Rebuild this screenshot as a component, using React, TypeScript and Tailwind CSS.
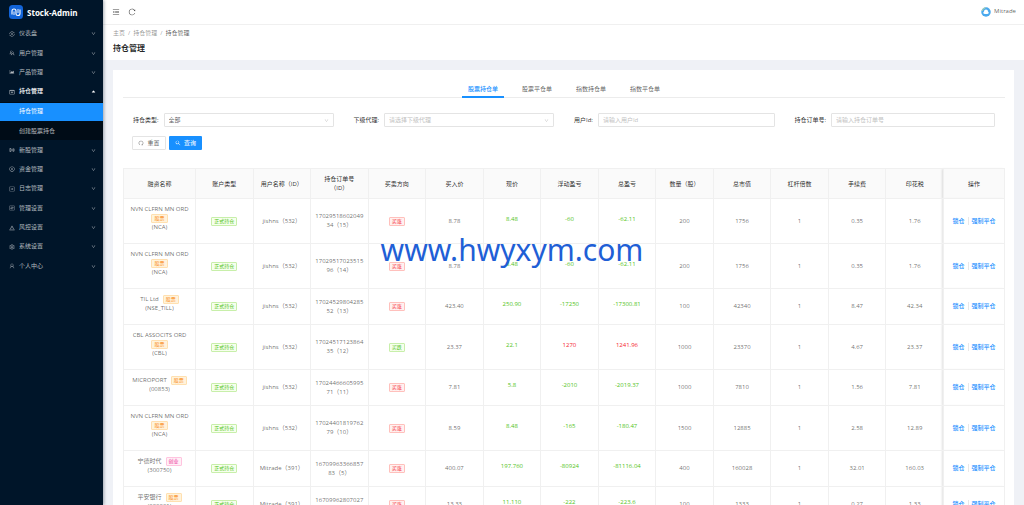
import {
  AiOutlineAreaChart,
  AiOutlineAccountBook,
  AiOutlineControl,
  AiOutlineDown,
  AiOutlineMenuFold,
  AiOutlinePayCircle,
  AiOutlineProfile,
  AiOutlineRedo,
  AiOutlineReload,
  AiOutlineSearch,
  AiOutlineSetting,
  AiOutlineSliders,
  AiOutlineTeam,
  AiOutlineTransaction,
  AiOutlineUser,
  AiOutlineWarning,
  AiFillCaretUp,
} from 'react-icons/ai'

const menu = [
  { label: '仪表盘', icon: AiOutlineTransaction },
  { label: '用户管理', icon: AiOutlineTeam },
  { label: '产品管理', icon: AiOutlineAreaChart },
  { label: '持仓管理', icon: AiOutlineAccountBook, children: ['持仓管理', '创建股票持仓'] },
  { label: '新股管理', icon: AiOutlineSliders },
  { label: '资金管理', icon: AiOutlinePayCircle },
  { label: '日志管理', icon: AiOutlineProfile },
  { label: '管理设置', icon: AiOutlineControl },
  { label: '风控设置', icon: AiOutlineWarning },
  { label: '系统设置', icon: AiOutlineSetting },
  { label: '个人中心', icon: AiOutlineUser },
]

const tabs = ['股票持仓单', '股票平仓单', '指数持仓单', '指数平仓单']

const columns = [
  '融资名称', '账户类型', '用户名称（ID）', '持仓订单号（ID）', '买卖方向', '买入价', '现价', '浮动盈亏',
  '总盈亏', '数量（股）', '总市值', '杠杆倍数', '手续费', '印花税', '操作',
]

const rows = [
  { name: 'NVN CLFRN MN ORD', code: 'NCA', tag: '股票', user: 'jishns（532）', order: ['17029518602049', '34（15）'], side: '买涨', buy: '8.78', price: '8.48', float: '-60', total: '-62.11', qty: '200', value: '1756', lever: '1', fee: '0.35', tax: '1.76' },
  { name: 'NVN CLFRN MN ORD', code: 'NCA', tag: '股票', user: 'jishns（532）', order: ['17029517023515', '96（14）'], side: '买涨', buy: '8.78', price: '8.48', float: '-60', total: '-62.11', qty: '200', value: '1756', lever: '1', fee: '0.35', tax: '1.76' },
  { name: 'TIL Ltd', code: 'NSE_TILL', tag: '股票', user: 'jishns（532）', order: ['17024529804285', '52（13）'], side: '买涨', buy: '423.40', price: '250.90', float: '-17250', total: '-17300.81', qty: '100', value: '42340', lever: '1', fee: '8.47', tax: '42.34' },
  { name: 'CBL ASSOCITS ORD', code: 'CBL', tag: '股票', user: 'jishns（532）', order: ['17024517123864', '35（12）'], side: '买跌', buy: '23.37', price: '22.1', float: '1270', total: '1241.96', qty: '1000', value: '23370', lever: '1', fee: '4.67', tax: '23.37' },
  { name: 'MICROPORT', code: '00853', tag: '股票', user: 'jishns（532）', order: ['17024466605995', '71（11）'], side: '买涨', buy: '7.81', price: '5.8', float: '-2010', total: '-2019.37', qty: '1000', value: '7810', lever: '1', fee: '1.56', tax: '7.81' },
  { name: 'NVN CLFRN MN ORD', code: 'NCA', tag: '股票', user: 'jishns（532）', order: ['17024401819762', '79（10）'], side: '买涨', buy: '8.59', price: '8.48', float: '-165', total: '-180.47', qty: '1500', value: '12885', lever: '1', fee: '2.58', tax: '12.89' },
  { name: '宁德时代', code: '300750', tag: '创业', user: 'Mitrade（391）', order: ['16709963366857', '83（5）'], side: '买涨', buy: '400.07', price: '197.760', float: '-80924', total: '-81116.04', qty: '400', value: '160028', lever: '1', fee: '32.01', tax: '160.03' },
  { name: '平安银行', code: '000001', tag: '股票', user: 'Mitrade（391）', order: ['16709962807027', '20（4）'], side: '买涨', buy: '13.33', price: '11.110', float: '-222', total: '-223.6', qty: '100', value: '1333', lever: '1', fee: '0.27', tax: '1.33' },
]

const tagColors = {
  orange: 'border-[#ffe0b0] bg-[#fff3dc] text-[#fa8c16]',
  pink: 'border-[#ffc4df] bg-[#fff0f6] text-[#eb2f96]',
  green: 'border-[#c8efaa] bg-[#f6ffed] text-[#52c41a]',
  red: 'border-[#ffc0bc] bg-[#fff1f0] text-[#f5222d]',
}

function Tag({ color, children }: { color: keyof typeof tagColors; children: string }) {
  return (
    <span className={`inline-block rounded-[1px] border px-[2px] text-[5px] leading-[7px] ${tagColors[color]}`}>
      {children}
    </span>
  )
}

function Sidebar() {
  return (
    <aside className="z-10 flex w-[103px] shrink-0 flex-col bg-[#001529] text-white/70 shadow-[1px_0_3px_rgba(0,21,41,0.35)]">
      <div className="flex h-6 items-center gap-1 pl-[9px]">
        <svg viewBox="0 0 28 28" className="size-[14px]" aria-hidden="true">
          <rect width="28" height="28" rx="7" fill="#1264d8" />
          <path d="M6 19v-7q0-4 4-4t4 4v6q0 3 4 3t4-4V9" fill="none" stroke="#fff" strokeWidth="2.200" />
          <path d="M10 13v7M18 8v8" fill="none" stroke="#fff" strokeWidth="1.800" />
        </svg>
        <span className="text-[8px] font-bold text-white">Stock-Admin</span>
      </div>
      <nav className="flex h-[252px] flex-col">
        {menu.map(({ label, icon: Icon, children }) => (
          <div key={label} className={`flex flex-col ${children ? 'flex-[3]' : 'flex-1'}`}>
            <button className={`flex w-full flex-1 items-center pl-[9px] pr-[7px] ${children ? 'font-medium text-white' : ''}`}>
              <Icon className="mr-1 size-[6px]" />
              <span>{label}</span>
              {children ? <AiFillCaretUp className="ml-auto size-[5px]" /> : <AiOutlineDown className="ml-auto size-[5px]" />}
            </button>
            {children && (
              <div className="flex flex-[2] flex-col bg-[#000c17]">
                {children.map((child, i) => (
                  <a
                    key={child}
                    href="#"
                    className={`flex flex-1 items-center pl-[19px] ${i === 0 ? 'my-px bg-[#1890ff] text-white' : ''}`}
                  >
                    {child}
                  </a>
                ))}
              </div>
            )}
          </div>
        ))}
      </nav>
    </aside>
  )
}

function PageHeader() {
  return (
    <header className="bg-white">
      <div className="flex h-[25px] items-center border-b border-[#f0f0f0] pb-px pl-[9px] pr-2">
        <button aria-label="收起菜单">
          <AiOutlineMenuFold className="size-2 text-black/75" />
        </button>
        <button aria-label="刷新" className="ml-2">
          <AiOutlineReload className="size-2 text-black/75" />
        </button>
        <div className="ml-auto flex items-center gap-[3px] text-black/65">
          <svg viewBox="0 0 20 20" className="size-[10px]" aria-hidden="true">
            <circle cx="10" cy="10" r="9.500" fill="#4aa9ee" />
            <path d="M2 8a9 9 0 0 1 7-6.500" fill="none" stroke="#b9d8a0" strokeWidth="2" />
            <path d="M5 13a3 3 0 0 1 1-4 4 4 0 0 1 8 0 3 3 0 0 1 1 4q-5 2-10 0z" fill="#fff" />
          </svg>
          <span>Mitrade</span>
        </div>
      </div>
      <div className="px-[10px] pb-[6px] pt-1">
        <div className="flex gap-[3px] leading-[9px] text-black/45">
          <a href="#">主页</a>
          <span>/</span>
          <a href="#">持仓管理</a>
          <span>/</span>
          <span className="text-black/65">持仓管理</span>
        </div>
        <h1 className="mt-1 text-[8px] font-bold leading-[12px] text-black/85">持仓管理</h1>
      </div>
    </header>
  )
}

function Filters() {
  const box = 'h-[14px] min-w-0 flex-1 rounded-[1px] border border-[#e4e4e4] bg-white px-1 placeholder:text-[#bfbfbf]'
  return (
    <form className="mt-[15px]">
      <div className="grid grid-cols-4">
        <div className="flex items-center gap-[5px] px-[10px]">
          <label htmlFor="type" className="text-black/85">持仓类型:</label>
          <div className="relative flex min-w-0 flex-1">
            <select id="type" className={`${box} appearance-none text-black/65`}>
              <option>全部</option>
            </select>
            <AiOutlineDown className="pointer-events-none absolute right-[5px] top-[5px] size-[5px] text-[#bfbfbf]" />
          </div>
        </div>
        <div className="flex items-center gap-[5px] px-[10px]">
          <label htmlFor="agent" className="text-black/85">下级代理:</label>
          <div className="relative flex min-w-0 flex-1">
            <select id="agent" className={`${box} appearance-none text-[#bfbfbf]`}>
              <option>请选择下级代理</option>
            </select>
            <AiOutlineDown className="pointer-events-none absolute right-[5px] top-[5px] size-[5px] text-[#bfbfbf]" />
          </div>
        </div>
        <div className="flex items-center gap-[5px] px-[10px]">
          <label htmlFor="user" className="text-black/85">用户Id:</label>
          <input id="user" placeholder="请输入用户Id" className={box} />
        </div>
        <div className="flex items-center gap-[5px] px-[10px]">
          <label htmlFor="order" className="text-black/85">持仓订单号:</label>
          <input id="order" placeholder="请输入持仓订单号" className={box} />
        </div>
      </div>
      <div className="mt-[9px] flex gap-[3px] px-[9px]">
        <button type="button" className="flex h-[14px] w-[34px] items-center justify-center gap-[3px] rounded-[1px] border border-[#e4e4e4] text-black/65">
          <AiOutlineRedo className="size-[6px]" />
          重置
        </button>
        <button type="button" className="flex h-[14px] w-[33px] items-center justify-center gap-[3px] rounded-[1px] bg-[#1890ff] text-white">
          <AiOutlineSearch className="size-[6px]" />
          查询
        </button>
      </div>
    </form>
  )
}

function Positions() {
  const border = 'border border-[#f0f0f0]'
  const profit = (v: string) => `${border} pb-1 font-medium ${v.startsWith('-') ? 'text-[#52c41a]' : 'text-[#f5222d]'}`
  return (
    <table className="mt-[18px] w-full table-fixed border-collapse text-center leading-[9px] text-black/60">
      <colgroup>
        {columns.map((c, i) => (
          <col key={c} className={i === 0 ? 'w-[72px]' : i === columns.length - 1 ? 'w-[61px]' : ''} />
        ))}
      </colgroup>
      <thead className="bg-[#fafafa] text-black/85">
        <tr className="h-[30px]">
          {columns.map((c, i) => (
            <th
              key={c}
              className={`${border} px-[6px] pt-px font-normal ${i === columns.length - 1 ? 'shadow-[-2px_0_2px_rgba(0,0,0,0.12)]' : ''}`}
            >
              {c}
            </th>
          ))}
        </tr>
      </thead>
      <tbody>
        {rows.map((r) => (
          <tr key={r.order[0]}>
            <td className={`${border} whitespace-nowrap pb-[11px] pt-[6px]`}>
              {r.name}
              {r.name.length > 12 ? <br /> : <span className="mr-1" />}
              <Tag color={r.tag === '创业' ? 'pink' : 'orange'}>{r.tag}</Tag>
              <br />({r.code})
            </td>
            <td className={border}>
              <Tag color="green">正式持仓</Tag>
            </td>
            <td className={border}>{r.user}</td>
            <td className={border}>
              {r.order[0]}
              <br />
              {r.order[1]}
            </td>
            <td className={border}>
              <Tag color={r.side === '买涨' ? 'red' : 'green'}>{r.side}</Tag>
            </td>
            <td className={border}>{r.buy}</td>
            <td className={`${border} pb-1 font-medium text-[#52c41a]`}>{r.price}</td>
            <td className={profit(r.float)}>{r.float}</td>
            <td className={profit(r.total)}>{r.total}</td>
            <td className={border}>{r.qty}</td>
            <td className={border}>{r.value}</td>
            <td className={border}>{r.lever}</td>
            <td className={border}>{r.fee}</td>
            <td className={border}>{r.tax}</td>
            <td className={`${border} bg-white font-medium text-[#1890ff] shadow-[-2px_0_2px_rgba(0,0,0,0.12)]`}>
              <a href="#">锁仓</a>
              <span className="mx-[3px] border-l border-[#e8e8e8]" />
              <a href="#">强制平仓</a>
            </td>
          </tr>
        ))}
      </tbody>
    </table>
  )
}

export default function App() {
  return (
    <div className="relative flex h-screen overflow-hidden bg-[#eff1f6] font-['Open_Sans','Noto_Sans_CJK_SC',sans-serif] text-[6px] leading-[9px]">
      <Sidebar />
      <div className="min-w-0 flex-1">
        <PageHeader />
        <main className="mx-[10px] mt-[10px] bg-white pb-[10px] pl-[10px] pr-[9px] pt-3">
          <div className="flex justify-center gap-3 border-b border-[#ececec]">
            {tabs.map((t, i) => (
              <button
                key={t}
                className={`-mb-px h-4 border-b-2 px-[6px] ${
                  i === 0 ? 'border-[#1890ff] font-medium text-[#1890ff]' : 'border-transparent text-black/65'
                }`}
              >
                {t}
              </button>
            ))}
          </div>
          <Filters />
          <Positions />
        </main>
      </div>
      <div className="pointer-events-none absolute inset-x-0 top-[228px] z-20 text-center font-['Noto_Sans',sans-serif] text-[30px] leading-[44px] text-[#1f5fd6]">
        www.hwyxym.com
      </div>
    </div>
  )
}
